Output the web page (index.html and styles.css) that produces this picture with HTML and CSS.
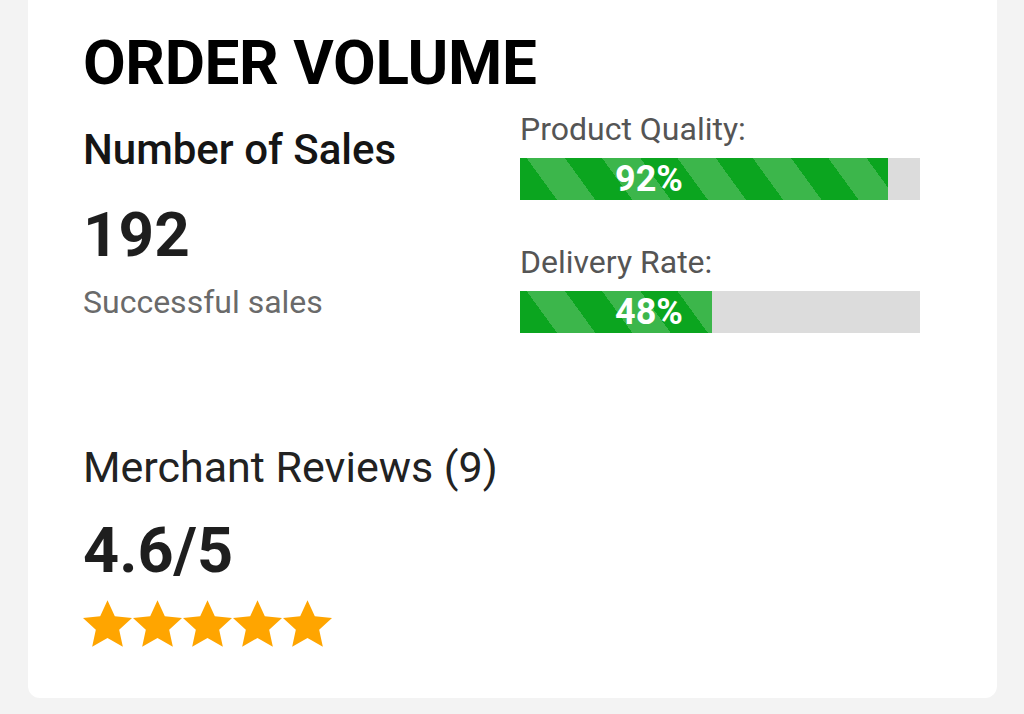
FILE: index.html
```html
<!DOCTYPE html>
<html lang="en">
<head>
<meta charset="utf-8">
<title>Order Volume</title>
<link rel="stylesheet" href="styles.css">
</head>
<body>
<div class="card">
  <h1 class="title">ORDER VOLUME</h1>
  <div class="stats">
    <div class="sales">
      <div class="sales-label">Number of Sales</div>
      <div class="sales-value">192</div>
      <div class="sales-sub">Successful sales</div>
    </div>
    <div class="metrics">
      <div class="metric">
        <div class="metric-label">Product Quality:</div>
        <div class="bar"><div class="bar-fill" style="width: 92%"><span class="bar-text">92%</span></div></div>
      </div>
      <div class="metric">
        <div class="metric-label">Delivery Rate:</div>
        <div class="bar"><div class="bar-fill" style="width: 48%"><span class="bar-text">48%</span></div></div>
      </div>
    </div>
  </div>
  <div class="reviews">
    <div class="reviews-label">Merchant Reviews (9)</div>
    <div class="reviews-score">4.6/5</div>
    <div class="stars">
      <svg class="star" viewBox="1.3 1.6 21.4 20.2"><path d="M12 1.6l3.2 6.9 7.5.8-5.6 5.1 1.6 7.4L12 18l-6.7 3.8 1.6-7.4-5.6-5.1 7.5-.8z"/></svg>
      <svg class="star" viewBox="1.3 1.6 21.4 20.2"><path d="M12 1.6l3.2 6.9 7.5.8-5.6 5.1 1.6 7.4L12 18l-6.7 3.8 1.6-7.4-5.6-5.1 7.5-.8z"/></svg>
      <svg class="star" viewBox="1.3 1.6 21.4 20.2"><path d="M12 1.6l3.2 6.9 7.5.8-5.6 5.1 1.6 7.4L12 18l-6.7 3.8 1.6-7.4-5.6-5.1 7.5-.8z"/></svg>
      <svg class="star" viewBox="1.3 1.6 21.4 20.2"><path d="M12 1.6l3.2 6.9 7.5.8-5.6 5.1 1.6 7.4L12 18l-6.7 3.8 1.6-7.4-5.6-5.1 7.5-.8z"/></svg>
      <svg class="star" viewBox="1.3 1.6 21.4 20.2"><path d="M12 1.6l3.2 6.9 7.5.8-5.6 5.1 1.6 7.4L12 18l-6.7 3.8 1.6-7.4-5.6-5.1 7.5-.8z"/></svg>
    </div>
  </div>
</div>
</body>
</html>
```

FILE: styles.css
```css
html, body {
  margin: 0;
  padding: 0;
  background: #f3f3f3;
  font-family: Roboto, "Noto Sans", "Liberation Sans", sans-serif;
  overflow: hidden;
}

.card {
  box-sizing: border-box;
  margin-left: 28px;
  width: 969px;
  height: 698px;
  background: #ffffff;
  border-radius: 0 0 12px 12px;
  padding: 32px 0 0 55px;
}

.title {
  margin: 0;
  font-size: 62px;
  line-height: 62px;
  font-weight: 700;
  color: #000;
  letter-spacing: -0.4px;
}

.stats {
  display: flex;
  margin-top: 18px;
}

.sales {
  width: 437px;
  flex: none;
}

.sales-label {
  font-size: 42px;
  line-height: 48px;
  font-weight: 500;
  color: #151515;
  margin-top: 14px;
}

.sales-value {
  font-size: 62px;
  line-height: 62px;
  font-weight: 700;
  color: #1e1e1e;
  margin-top: 30px;
}

.sales-sub {
  font-size: 32px;
  line-height: 34px;
  color: #6a6a6a;
  margin-top: 19px;
}

.metrics {
  width: 400px;
  display: flex;
  flex-direction: column;
  gap: 45px;
}

.metric-label {
  font-size: 32px;
  line-height: 34px;
  color: #555;
  margin-bottom: 12px;
}

.bar {
  height: 42px;
  background: #dcdcdc;
}

.bar-fill {
  height: 100%;
  box-sizing: border-box;
  padding-left: 95px;
  background: repeating-linear-gradient(54deg, #0ba51f 0 30px, #3cb64b 30px 61px);
  display: flex;
  align-items: center;
}

.bar-text {
  color: #fff;
  font-size: 36px;
  font-weight: 700;
  line-height: 42px;
  white-space: nowrap;
}

.reviews {
  margin-top: 110px;
}

.reviews-label {
  font-size: 43px;
  line-height: 48px;
  color: #222;
}

.reviews-score {
  font-size: 63px;
  line-height: 62px;
  font-weight: 700;
  color: #1e1e1e;
  margin-top: 29px;
}

.stars {
  display: flex;
  gap: 1px;
  margin-top: 18px;
}

.star {
  width: 49px;
  height: 47px;
  fill: #ffa500;
}
```
